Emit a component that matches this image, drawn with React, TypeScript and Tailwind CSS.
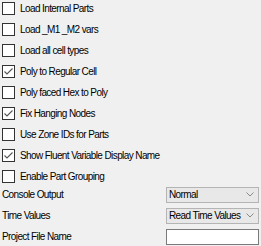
const options = [
  { label: "Load Internal Parts", checked: false },
  { label: "Load _M1 _M2 vars", checked: false },
  { label: "Load all cell types", checked: false },
  { label: "Poly to Regular Cell", checked: true },
  { label: "Poly faced Hex to Poly", checked: false },
  { label: "Fix Hanging Nodes", checked: true },
  { label: "Use Zone IDs for Parts", checked: false },
  { label: "Show Fluent Variable Display Name", checked: true },
  { label: "Enable Part Grouping", checked: false },
];

const CheckBox = ({ checked }: { checked: boolean }) => (
  <span className="w-[13px] h-[13px] shrink-0 border border-[#333333] bg-white flex items-center justify-center">
    {checked && (
      <svg width="11" height="11" viewBox="0 0 11 11">
        <path d="M1.5 5.5 L4 8 L9.5 2.5" fill="none" stroke="#555555" strokeWidth="1.1" />
      </svg>
    )}
  </span>
);

const Chevron = () => (
  <svg width="8" height="5" viewBox="0 0 8 5">
    <path d="M0.5 0.5 L4 4 L7.5 0.5" fill="none" stroke="#8a8a8a" strokeWidth="1" />
  </svg>
);

const Combo = ({ value }: { value: string }) => (
  <div className="w-[93px] h-[16px] border border-[#b4b4b4] bg-[#e8e8e8] flex items-center justify-between pl-[2px] pr-[4px]">
    <span className="whitespace-nowrap">{value}</span>
    <Chevron />
  </div>
);

export default function App() {
  return (
    <div
      className="w-[261px] h-[246px] bg-[#f0f0f0] text-[10px] tracking-[-0.6px] text-black overflow-hidden px-[2px]"
      style={{ fontFamily: '"Liberation Sans", Arial, sans-serif' }}
    >
      <div className="flex flex-col mt-[-2px]">
        {options.map((o) => (
          <div key={o.label} className="h-[21px] flex items-center gap-[5px]">
            <CheckBox checked={o.checked} />
            <span className="whitespace-nowrap">{o.label}</span>
          </div>
        ))}
      </div>
      <div className="flex flex-col mt-[-3px]">
        <div className="h-[21px] flex items-center justify-between">
          <span>Console Output</span>
          <Combo value="Normal" />
        </div>
        <div className="h-[21px] flex items-center justify-between">
          <span>Time Values</span>
          <Combo value="Read Time Values" />
        </div>
        <div className="h-[21px] flex items-center justify-between">
          <span>Project File Name</span>
          <div className="w-[93px] h-[16px] border border-[#7a7a7a] bg-white" />
        </div>
      </div>
    </div>
  );
}
